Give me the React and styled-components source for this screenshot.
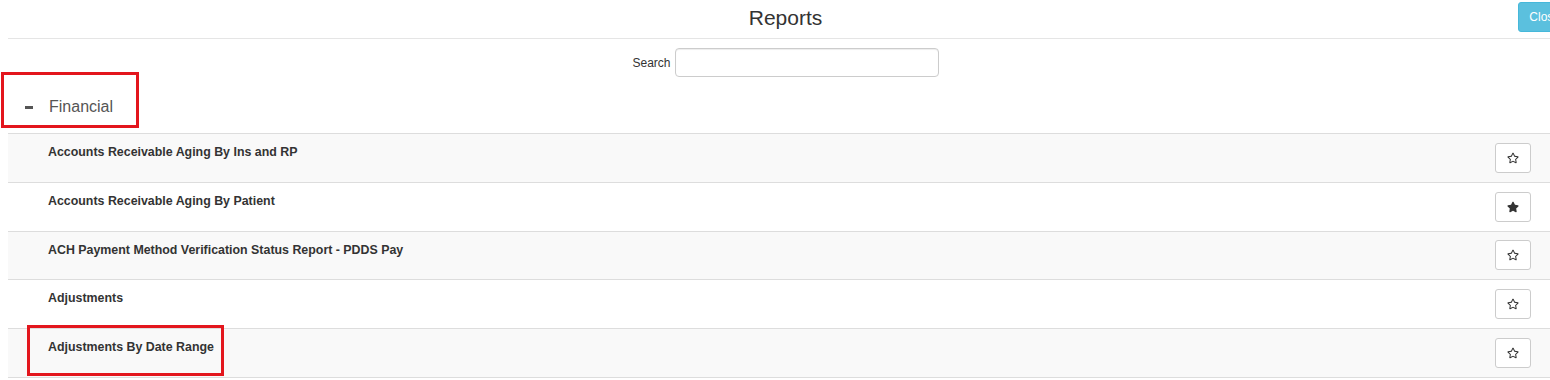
import React from "react";
import styled, { createGlobalStyle } from "styled-components";
import { FaRegStar, FaStar } from "react-icons/fa";

const GlobalStyle = createGlobalStyle`
  body {
    margin: 0;
    background: #fff;
    font-family: "Liberation Sans", Arial, sans-serif;
    color: #333;
    overflow: hidden;
  }
`;

const Canvas = styled.div`
  position: relative;
  width: 1550px;
  height: 380px;
  overflow: hidden;
`;

const Page = styled.div`
  width: 1555px;
  margin-left: 8px;
`;

const Header = styled.div`
  position: relative;
  height: 38px;
  border-bottom: 1px solid #e5e5e5;
  display: flex;
  justify-content: center;
  align-items: center;
`;

const Title = styled.h4`
  margin: 0;
  font-size: 21px;
  font-weight: normal;
  line-height: 1.1;
  color: #333;
  padding-bottom: 2px;
`;

const CloseButton = styled.button`
  position: absolute;
  top: 2px;
  right: -8px;
  height: 30px;
  padding: 5px 10px;
  font-family: inherit;
  font-size: 12px;
  line-height: 18px;
  color: #fff;
  background: #5bc0de;
  border: 1px solid #46b8da;
  border-radius: 3px;
`;

const SearchRow = styled.div`
  margin-top: 9px;
  display: flex;
  justify-content: center;
  align-items: center;
  gap: 4px;
`;

const Label = styled.label`
  font-size: 12px;
  color: #333;
`;

const SearchInput = styled.input`
  box-sizing: border-box;
  width: 264px;
  height: 29px;
  border: 1px solid #ccc;
  border-radius: 4px;
  box-shadow: inset 0 1px 1px rgba(0, 0, 0, 0.075);
`;

const SectionHeader = styled.div`
  box-sizing: border-box;
  height: 56px;
  padding: 4px 0 0 17px;
  display: flex;
  align-items: center;
  gap: 16px;
`;

const Minus = styled.span`
  width: 8px;
  height: 3px;
  background: #555;
`;

const SectionTitle = styled.span`
  font-size: 16px;
  color: #555;
`;

const List = styled.div`
  border-bottom: 1px solid #ddd;
`;

const Row = styled.div`
  height: 47.75px;
  border-top: 1px solid #ddd;
  background: ${(p) => (p.$striped ? "#f9f9f9" : "#fff")};
  display: flex;
  justify-content: space-between;
  padding: 0 32px 0 40px;
`;

const RowName = styled.div`
  padding-top: 10px;
  font-size: 12.4px;
  line-height: 17px;
  font-weight: bold;
  color: #333;
`;

const StarButton = styled.button`
  align-self: center;
  box-sizing: border-box;
  width: 36px;
  height: 30px;
  display: flex;
  align-items: center;
  justify-content: center;
  background: #fff;
  border: 1px solid #ccc;
  border-radius: 3px;
  color: #333;
  padding: 0;
`;

const Highlight = styled.div`
  position: absolute;
  box-sizing: border-box;
  border: 3px solid #e3161d;
  left: ${(p) => p.$x}px;
  top: ${(p) => p.$y}px;
  width: ${(p) => p.$w}px;
  height: ${(p) => p.$h}px;
`;

const reports = [
  { name: "Accounts Receivable Aging By Ins and RP", fav: false },
  { name: "Accounts Receivable Aging By Patient", fav: true },
  { name: "ACH Payment Method Verification Status Report - PDDS Pay", fav: false },
  { name: "Adjustments", fav: false },
  { name: "Adjustments By Date Range", fav: false },
];

export default function App() {
  return (
    <Canvas>
      <GlobalStyle />
      <Page>
        <Header>
          <Title>Reports</Title>
          <CloseButton>Close</CloseButton>
        </Header>
        <SearchRow>
          <Label>Search</Label>
          <SearchInput type="text" />
        </SearchRow>
        <SectionHeader>
          <Minus />
          <SectionTitle>Financial</SectionTitle>
        </SectionHeader>
        <List>
          {reports.map((r, i) => (
            <Row key={r.name} $striped={i % 2 === 0}>
              <RowName>{r.name}</RowName>
              <StarButton>
                {r.fav ? <FaStar size={12} /> : <FaRegStar size={12} />}
              </StarButton>
            </Row>
          ))}
        </List>
      </Page>
      <Highlight $x={1} $y={72} $w={138} $h={56} />
      <Highlight $x={27} $y={325} $w={197} $h={51} />
    </Canvas>
  );
}
